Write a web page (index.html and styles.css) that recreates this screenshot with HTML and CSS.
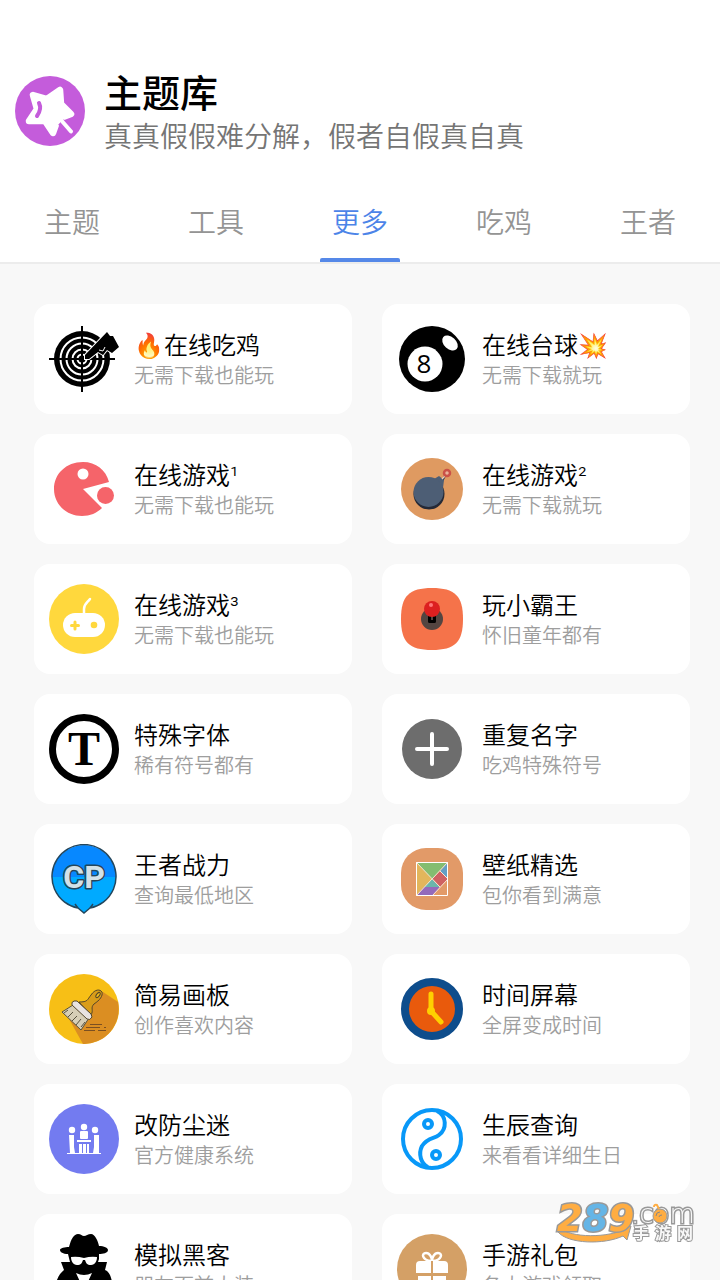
FILE: index.html
```html
<!DOCTYPE html>
<html lang="zh-CN">
<head>
    <meta charset="UTF-8">
    <meta name="viewport" content="width=device-width, initial-scale=1.0">
    <title>主题库</title>
    <link rel="stylesheet" href="styles.css">
</head>
<body>

<header class="header">
    <svg class="logo" viewBox="0 0 70 70" aria-hidden="true">
        <circle cx="35" cy="35" r="35" fill="#c45cdb"/>
        <path d="M18 19 L32 23 L45 14 L46 28 L56 38 L43 43 L38 57 L30 45 L14 45 L22 33 Z" fill="#fff" stroke="#fff" stroke-width="6.500" stroke-linejoin="round"/>
        <path d="M46 46 L58 58" fill="none" stroke="#c45cdb" stroke-width="8"/>
        <path d="M46 44 L56 55.500" fill="none" stroke="#fff" stroke-width="4" stroke-linecap="round"/>
        <path d="M24 27 Q27 33 22 40" fill="none" stroke="#c45cdb" stroke-width="4" stroke-linecap="round"/>
    </svg>
    <div class="header-text">
        <h1>主题库</h1>
        <p>真真假假难分解，假者自假真自真</p>
    </div>
</header>

<nav class="tabs">
    <button class="tab">主题</button>
    <button class="tab">工具</button>
    <button class="tab active">更多</button>
    <button class="tab">吃鸡</button>
    <button class="tab">王者</button>
</nav>

<main class="list">
    <a class="card" href="#">
        <svg class="icon" viewBox="0 0 70 70" aria-hidden="true">
            <circle cx="33" cy="35" r="28" fill="#000"/>
            <g fill="none" stroke="#fff" stroke-width="2">
                <circle cx="33" cy="35" r="21.500"/>
                <circle cx="33" cy="35" r="15.500"/>
                <circle cx="33" cy="35" r="9.500"/>
                <circle cx="33" cy="35" r="4.500"/>
            </g>
            <path d="M33 2 V68 M0 35 H66" stroke="#000" stroke-width="2"/>
            <path d="M36 31 L58 8 L61 12 L64 12 L70 23 L63 29 L58 26 L54 31 L49 28 L40 35 L36 35 Z" fill="#000" stroke="#fff" stroke-width="2" paint-order="stroke"/>
            <path d="M50 26 L54 27 L56 23" fill="none" stroke="#fff" stroke-width="1"/>
        </svg>
        <div class="card-text">
            <h2>🔥在线吃鸡</h2>
            <p>无需下载也能玩</p>
        </div>
    </a>
    <a class="card" href="#">
        <svg class="icon" viewBox="0 0 70 70" aria-hidden="true">
            <circle cx="35" cy="35" r="33" fill="#000"/>
            <circle cx="28" cy="40" r="17.500" fill="#fff"/>
            <ellipse cx="53" cy="19" rx="9" ry="6" fill="#fff" transform="rotate(42 53 19)"/>
            <text class="eight" x="27" y="49" text-anchor="middle">8</text>
        </svg>
        <div class="card-text">
            <h2>在线台球💥</h2>
            <p>无需下载就玩</p>
        </div>
    </a>
    <a class="card" href="#">
        <svg class="icon" viewBox="0 0 70 70" aria-hidden="true">
            <path d="M34 35 L60 28 C57 16 47 8 34 8 C17 8 5 20 5 35 C5 50 17 62 33 62 C41 62 48 59 53 54 Z" fill="#f5646a"/>
            <circle cx="34" cy="20" r="5.500" fill="#fff"/>
            <circle cx="56.500" cy="41.500" r="10" fill="#fff"/>
            <circle cx="56.500" cy="41.500" r="8.500" fill="#f5646a"/>
        </svg>
        <div class="card-text">
            <h2>在线游戏¹</h2>
            <p>无需下载也能玩</p>
        </div>
    </a>
    <a class="card" href="#">
        <svg class="icon" viewBox="0 0 70 70" aria-hidden="true">
            <circle cx="35" cy="35" r="31" fill="#df9a61"/>
            <circle cx="32" cy="40" r="15.500" fill="#252936"/>
            <path d="M44 29 L49 20" stroke="#32394a" stroke-width="2"/>
            <path d="M37 25 L42 22 L47 26 L46 34 Z" fill="#4d5e75"/>
            <circle cx="31.500" cy="38" r="15" fill="#4d5e75"/>
            <path d="M45 25 L48 22" stroke="#f0d1bb" stroke-width="1.500"/>
            <circle cx="50" cy="19" r="3" fill="#e9b49a" stroke="#cb5147" stroke-width="2.500"/>
        </svg>
        <div class="card-text">
            <h2>在线游戏²</h2>
            <p>无需下载就玩</p>
        </div>
    </a>
    <a class="card" href="#">
        <svg class="icon" viewBox="0 0 70 70" aria-hidden="true">
            <circle cx="35" cy="35" r="35" fill="#ffd83d"/>
            <rect x="14" y="29" width="42" height="24" rx="12" fill="#fff"/>
            <path d="M35 30 V25 C35 20 38 19 41 15" fill="none" stroke="#fff" stroke-width="2.500" stroke-linecap="round"/>
            <path d="M26 38 V45 M22.500 41.500 H29.500" stroke="#ffd83d" stroke-width="3" stroke-linecap="round"/>
            <circle cx="45" cy="41" r="3.300" fill="#ffd83d"/>
        </svg>
        <div class="card-text">
            <h2>在线游戏³</h2>
            <p>无需下载也能玩</p>
        </div>
    </a>
    <a class="card" href="#">
        <svg class="icon" viewBox="0 0 70 70" aria-hidden="true">
            <path d="M35 4 C58 4 66 12 66 35 C66 58 58 66 35 66 C12 66 4 58 4 35 C4 12 12 4 35 4 Z" fill="#f5734a"/>
            <circle cx="35" cy="35" r="11" fill="#534541"/>
            <path d="M32.500 32 V37.500 H37.500 V32" fill="none" stroke="#000" stroke-width="3" stroke-linejoin="round"/>
            <circle cx="35" cy="25" r="8" fill="#dc2020"/>
            <circle cx="34" cy="21" r="2" fill="#ff7777"/>
        </svg>
        <div class="card-text">
            <h2>玩小霸王</h2>
            <p>怀旧童年都有</p>
        </div>
    </a>
    <a class="card" href="#">
        <svg class="icon" viewBox="0 0 70 70" aria-hidden="true">
            <circle cx="35" cy="35" r="31.500" fill="#fff" stroke="#000" stroke-width="7"/>
            <text class="serif-t" x="35" y="51" text-anchor="middle">T</text>
        </svg>
        <div class="card-text">
            <h2>特殊字体</h2>
            <p>稀有符号都有</p>
        </div>
    </a>
    <a class="card" href="#">
        <svg class="icon" viewBox="0 0 70 70" aria-hidden="true">
            <circle cx="35" cy="35" r="30" fill="#6d6d6d"/>
            <path d="M35 20 V50 M20 35 H50" stroke="#fff" stroke-width="4" stroke-linecap="round"/>
        </svg>
        <div class="card-text">
            <h2>重复名字</h2>
            <p>吃鸡特殊符号</p>
        </div>
    </a>
    <a class="card" href="#">
        <svg class="icon" viewBox="0 0 70 70" aria-hidden="true">
            <path d="M3 33 A32 32 0 0 1 67 33 Z" fill="#0788ff"/>
            <path d="M3 33 A32 32 0 0 0 29 64 L35 69 L41 64 A32 32 0 0 0 67 33 Z" fill="#00aaff"/>
            <path d="M26 60 L29 64 A32 32 0 1 1 41 64 L44 60 M29 64 L35 69 L41 64" fill="none" stroke="#23465c" stroke-width="1.500"/>
            <text class="cp" x="35" y="44" text-anchor="middle">CP</text>
        </svg>
        <div class="card-text">
            <h2>王者战力</h2>
            <p>查询最低地区</p>
        </div>
    </a>
    <a class="card" href="#">
        <svg class="icon" viewBox="0 0 70 70" aria-hidden="true">
            <rect x="4" y="4" width="62" height="62" rx="25" fill="#e29a68"/>
            <path d="M19 18 L35 35 L19 52 Z" fill="#e2b65c"/>
            <path d="M19 18 H51 L35 35 Z" fill="#84bd70"/>
            <path d="M51 18 V35 L43 27 Z" fill="#659fc4"/>
            <path d="M43 27 L51 35 L43 43 L35 35 Z" fill="#cf6262"/>
            <path d="M35 35 L43 43 H27 Z" fill="#6bb5ab"/>
            <path d="M27 43 H43 L35 52 H19 Z" fill="#946abb"/>
            <path d="M19 18 L43 43 M51 18 L19 52 M43 27 L51 35 L35 52" fill="none" stroke="#fbe7d3" stroke-width="1"/>
            <path d="M19.500 18.500 H50.500 V51.500 H19.500 Z" fill="none" stroke="#fff" stroke-width="1"/>
        </svg>
        <div class="card-text">
            <h2>壁纸精选</h2>
            <p>包你看到满意</p>
        </div>
    </a>
    <a class="card" href="#">
        <svg class="icon" viewBox="0 0 70 70" aria-hidden="true">
            <circle cx="35" cy="35" r="35" fill="#f7bf16"/>
            <path d="M54 18 L69 28 A35 35 0 0 1 34 70 L20 45 Z" fill="#db8e22"/>
            <path d="M30 28 C39 28 38 26 42 21 C46 15 51 15 53 18 C54 22 51 26 45 30 C41 34 45 36 42 41 Z" fill="#d99d19" stroke="#554729" stroke-width="1"/>
            <ellipse cx="49" cy="21" rx="3" ry="1.500" fill="#f7bf16" stroke="#554729" stroke-width="1" transform="rotate(-52 49 21)"/>
            <path d="M24 31 L13 38 L32 56 L40 44 Z" fill="#d6ceb6" stroke="#57513d" stroke-width="1"/>
            <path d="M25 27 Q22 28 23 31 L38 45 Q41 47 43 43 L42 40 L28 27 Z" fill="#e8e3e1" stroke="#554729" stroke-width="1"/>
            <path d="M19 36 L15 39 M24 38 L19 43 M28 42 L23 47 M32 45 L27 51 M36 48 L32 53" stroke="#57513d" stroke-width="1"/>
            <path d="M41 50.500 H53 M37 53.500 H51 M55 53.500 H57 M35 56.500 H46 M49 56.500 H57" stroke="#7b4f22" stroke-width="1"/>
        </svg>
        <div class="card-text">
            <h2>简易画板</h2>
            <p>创作喜欢内容</p>
        </div>
    </a>
    <a class="card" href="#">
        <svg class="icon" viewBox="0 0 70 70" aria-hidden="true">
            <circle cx="35" cy="35" r="27" fill="#e95a0c" stroke="#0e4d8c" stroke-width="8"/>
            <path d="M34 20 V37 L44 48" fill="none" stroke="#ffd000" stroke-width="5" stroke-linecap="round" stroke-linejoin="round"/>
            <circle cx="34" cy="37" r="4" fill="#ffd000"/>
        </svg>
        <div class="card-text">
            <h2>时间屏幕</h2>
            <p>全屏变成时间</p>
        </div>
    </a>
    <a class="card" href="#">
        <svg class="icon" viewBox="0 0 70 70" aria-hidden="true">
            <circle cx="35" cy="35" r="35" fill="#737bf0"/>
            <g fill="#fff">
                <circle cx="35" cy="23" r="3.200"/>
                <rect x="31" y="27" width="8" height="8" rx="1"/>
                <rect x="28" y="36" width="14" height="2"/>
                <circle cx="23" cy="26" r="3.200"/>
                <path d="M20 31 H25 V43 L26 49 H21 Z"/>
                <circle cx="46" cy="26" r="3.200"/>
                <path d="M45 31 H50 V49 H44 L45 43 Z"/>
                <path d="M30 40 H33 V49 H30 Z M34 40 H37 V49 H34 Z M38 40 H40 V49 H38 Z"/>
                <rect x="18" y="49" width="34" height="1"/>
            </g>
        </svg>
        <div class="card-text">
            <h2>改防尘迷</h2>
            <p>官方健康系统</p>
        </div>
    </a>
    <a class="card" href="#">
        <svg class="icon" viewBox="0 0 70 70" aria-hidden="true">
            <g fill="none" stroke="#0898f8" stroke-width="4">
                <circle cx="35" cy="35" r="29"/>
                <path d="M40 7 C50 12 50 25 42 31 C37 35 31 33 25 42 C21 50 24 60 31 63"/>
                <circle cx="31" cy="20" r="4"/>
                <circle cx="39" cy="51" r="4"/>
            </g>
        </svg>
        <div class="card-text">
            <h2>生辰查询</h2>
            <p>来看看详细生日</p>
        </div>
    </a>
    <a class="card" href="#">
        <svg class="icon" viewBox="0 0 70 70" aria-hidden="true">
            <path d="M20 13 C22 5 25 0 29 0 C32 0 33 2 35 2 C37 2 39 0 42 0 C46 0 49 7 50 12 C55 12 59 14 59 16 C59 19 54 20 50 20 L50 25 L49 28 H58 L56 36 C61 38 64 43 65 70 H5 C5 48 9 41 15 36 L12 28 H21 L19 20 C14 20 11 18 11 16 C11 14 16 13 20 13 Z" fill="#000"/>
            <path d="M22 23 Q28 22 35 24 Q42 22 48 23 C48 27 46 31 42 31 C38 31 37 29 36 26 H34 C33 29 32 31 28 31 C24 31 22 27 22 23 Z" fill="#fff"/>
            <path d="M27 39 Q35 43 43 39 L37 52 H33 Z" fill="#fff"/>
        </svg>
        <div class="card-text">
            <h2>模拟黑客</h2>
            <p>朋友面前大装</p>
        </div>
    </a>
    <a class="card" href="#">
        <svg class="icon" viewBox="0 0 70 70" aria-hidden="true">
            <circle cx="35" cy="35" r="35" fill="#d4a066"/>
            <path d="M34 27 C25 26 24 19 29 19 C33 19 35 24 35 27 C35 24 37 19 41 19 C46 19 45 26 36 27" fill="none" stroke="#fff" stroke-width="2.500"/>
            <path d="M19 39 V31 Q19 27 23 27 H34 V39 Z M36 27 H47 Q51 27 51 31 V39 H36 Z M21 42 H34 V57 H25 Q21 57 21 53 Z M36 42 H49 V53 Q49 57 45 57 H36 Z" fill="#fff"/>
        </svg>
        <div class="card-text">
            <h2>手游礼包</h2>
            <p>各大游戏领取</p>
        </div>
    </a>
</main>

<!-- Site mark over the bottom corner -->
<svg class="watermark" viewBox="0 0 140 42" role="img" aria-label="289.com手游网">
    <path d="M2 25 C10 36 45 38 68 29 L66 27 L75 25 L71 39 L67 35 C48 44 12 43 2 31 Z" fill="#ffad42" stroke="#999" stroke-width="1"/>
    <text class="mark-number" x="1" y="30"><tspan>2</tspan><tspan class="mark-blue">8</tspan><tspan>9</tspan></text>
    <text class="mark-com" x="75" y="22">.com</text>
    <circle cx="104" cy="15" r="7" fill="#ffad42" stroke="#999" stroke-width="1"/>
    <path d="M98 6 Q98 3 101 4 L103 8" fill="none" stroke="#ffad42" stroke-width="2"/>
    <path d="M100 15 Q100 11 104 11 M103 16 Q103 14 106 14" fill="none" stroke="#888" stroke-width="1"/>
    <text class="mark-name" x="77" y="38">手</text>
    <text class="mark-name" x="99" y="38">游</text>
    <text class="mark-name" x="121" y="38">网</text>
</svg>

</body>
</html>
```
FILE: styles.css
```css
* {
    box-sizing: border-box;
}

body {
    font-family: Roboto, "Noto Sans CJK SC", sans-serif;
    font-weight: 350;
    background-color: #f8f8f8;
    color: #000;
    margin: 0;
    height: 100vh;
    display: flex;
    flex-direction: column;
    overflow: hidden;
}

h1, h2, p {
    margin: 0;
}

.header {
    display: flex;
    align-items: center;
    gap: 19px;
    padding: 63px 15px 19px;
    background-color: white;
}

.logo {
    width: 70px;
    height: 70px;
    flex: none;
}

.header-text {
    padding-top: 8px;
}

.header-text h1 {
    font-size: 38px;
    font-weight: 500;
    line-height: 46px;
}

.header-text p {
    font-size: 28px;
    line-height: 42px;
    color: #757575;
}

.tabs {
    display: flex;
    flex: none;
    background-color: white;
    border-bottom: 2px solid #ececec;
}

.tab {
    flex: 1;
    display: flex;
    flex-direction: column;
    align-items: center;
    padding: 12px 0 0;
    border: none;
    background: none;
    font: inherit;
    font-size: 28px;
    line-height: 68px;
    color: #949494;
    cursor: pointer;
}

.tab::after {
    content: "";
    width: 80px;
    height: 4px;
    border-radius: 2px 2px 0 0;
}

.tab.active {
    color: #4c84e8;
}

.tab.active::after {
    background-color: #5588e8;
}

.list {
    flex: 1;
    min-height: 0;
    overflow-y: auto;
    scrollbar-width: none;
    display: grid;
    grid-template-columns: 318fr 308fr;
    grid-auto-rows: 110px;
    gap: 20px 30px;
    padding: 40px 30px 40px 34px;
}

.card {
    display: flex;
    align-items: center;
    gap: 15px;
    padding: 0 15px;
    border-radius: 16px;
    background-color: white;
    color: inherit;
    text-decoration: none;
}

.icon {
    width: 70px;
    height: 70px;
    flex: none;
}

.card-text {
    padding-top: 4px;
    white-space: nowrap;
}

.card-text h2 {
    font-size: 24px;
    font-weight: 350;
    line-height: 30px;
}

.card-text p {
    font-size: 20px;
    line-height: 30px;
    color: #9e9e9e;
}

/* Lettering inside the icons */
.eight {
    font-family: "Open Sans", sans-serif;
    font-size: 26px;
    font-weight: 400;
}

.serif-t {
    font-family: "Liberation Serif", serif;
    font-size: 48px;
    font-weight: bold;
}

.cp {
    font-family: Roboto, sans-serif;
    font-size: 32px;
    font-weight: bold;
    fill: #d3e1e8;
    stroke: #23465c;
    stroke-width: 3px;
    stroke-linejoin: round;
    paint-order: stroke;
}

.watermark {
    position: fixed;
    right: 24px;
    bottom: 37px;
    width: 140px;
    height: 42px;
    overflow: visible;
}

.watermark text {
    stroke: #999;
    paint-order: stroke;
}

.mark-number {
    font-family: "DejaVu Sans", sans-serif;
    font-size: 37px;
    font-weight: bold;
    font-style: italic;
    fill: #ffad42;
    stroke-width: 3px;
}

.mark-blue {
    fill: #65b5e6;
}

.mark-com {
    font-family: "DejaVu Sans", sans-serif;
    font-size: 26px;
    fill: #f8f8f8;
    stroke-width: 3px;
}

.mark-name {
    font-size: 16px;
    font-weight: bold;
    fill: #f8f8f8;
    stroke-width: 2px;
}
```
